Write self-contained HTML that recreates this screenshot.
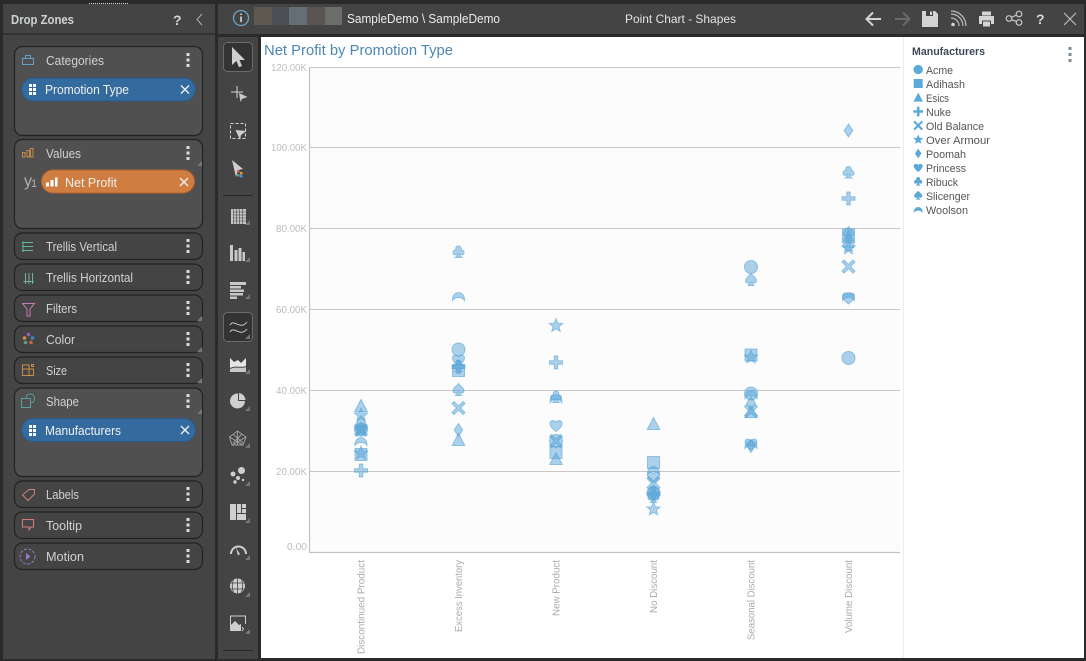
<!DOCTYPE html>
<html><head><meta charset="utf-8"><style>
html,body{margin:0;padding:0;background:#2a2a2a;width:1086px;height:661px;overflow:hidden}
svg{display:block}
text{font-family:"Liberation Sans",sans-serif}
.z{fill:#444;stroke:#222;stroke-width:1.2}
.zl{fill:#505050;stroke:#222;stroke-width:1.2}
.t{fill:#cfd2d4;font-size:12.5px}
.p{fill:#f0f0f0;font-size:12.5px}
.y{fill:#bdbdbd;font-size:10.5px;text-anchor:end}
.x{fill:#ababa6;font-size:10.5px;text-anchor:end}
.l{fill:#555;font-size:11px}
.i{fill:#cdcdcd}
.g{stroke:#c6c6c6;stroke-width:1}
</style></head><body>
<svg width="1086" height="661" viewBox="0 0 1086 661" xmlns="http://www.w3.org/2000/svg">
<defs>
<g id="ci"><circle r="6.5"/></g>
<g id="sq"><rect x="-6" y="-6" width="12" height="12"/></g>
<g id="tr"><path d="M0-6.5L6.3 5.5H-6.3Z"/></g>
<g id="pl"><path d="M-1.7-6.5H1.7V-1.7H6.5V1.7H1.7V6.5H-1.7V1.7H-6.5V-1.7H-1.7Z"/></g>
<g id="xx"><path d="M-4.5-6.5L0-2 4.5-6.5 6.5-4.5 2 0 6.5 4.5 4.5 6.5 0 2-4.5 6.5-6.5 4.5-2 0-6.5-4.5Z"/></g>
<g id="st"><path d="M0-6.8L1.9-2.3 6.6-2 3 1.1 4.1 5.8 0 3.3 -4.1 5.8 -3 1.1 -6.6-2 -1.9-2.3Z"/></g>
<g id="di"><path d="M0-6.5L4.3 0 0 6.5-4.3 0Z"/></g>
<g id="he"><path d="M0 6C-3 3.5-6 1-6-2C-6-5-2-6 0-3.2C2-6 6-5 6-2C6 1 3 3.5 0 6Z"/></g>
<g id="cl"><path d="M-1 1.8C-3.5 4-6 2.5-5.5 0C-5.2-1.8-3.6-2.2-2.4-1.8C-3.6-4-2-6 0-6C2-6 3.6-4 2.4-1.8C3.6-2.2 5.2-1.8 5.5 0C6 2.5 3.5 4 1 1.8C1.2 3.4 2 4.6 3.5 5.5H-3.5C-2 4.6-1.2 3.4-1 1.8Z"/></g>
<g id="sp"><path d="M0-6.5C2 -3.8 5.5-2 5.5.7C5.5 3 2.6 3.6 1 2.2C1.2 3.6 2 4.8 3.5 5.5H-3.5C-2 4.8-1.2 3.6-1 2.2C-2.6 3.6-5.5 3-5.5.7C-5.5-2-2-3.8 0-6.5Z"/></g>
<g id="wo"><path d="M-6 4.5C-6.5-6 6.5-6 6 4.5C3.5 .5-3.5 .5-6 4.5Z"/></g>
<g id="keb" fill="#dcdcdc"><rect x="-1.5" y="-7" width="3" height="3"/><rect x="-1.5" y="-1.5" width="3" height="3"/><rect x="-1.5" y="4" width="3" height="3"/></g>
<g id="grp" fill="#fff"><rect width="3" height="3"/><rect x="4" width="3" height="3"/><rect y="4" width="3" height="3"/><rect x="4" y="4" width="3" height="3"/><rect y="8" width="3" height="3"/><rect x="4" y="8" width="3" height="3"/></g>
<path id="cor" d="M5 0V5H0Z" fill="#777"/>
<path id="cur" d="M-6-10L7 3H1.5L4 9 1 10.300-1.600 4-6 8Z"/>
<path id="clo" d="M-4-4L4 4M4-4L-4 4" stroke="#f2f2f2" stroke-width="1.3" fill="none"/>
</defs>

<!-- frames -->
<rect width="1086" height="661" fill="#2a2a2a"/>
<rect x="3" y="4" width="212" height="655" fill="#444"/>
<rect x="3" y="33" width="212" height="2" fill="#333"/>
<path d="M89 3.5H129" stroke="#ddd" stroke-dasharray="1 1"/>
<rect x="218" y="4" width="866" height="30" fill="#444"/>
<rect x="218" y="37" width="40" height="622" fill="#444"/>
<rect x="261" y="37" width="823" height="621" fill="#fff"/>

<!-- left header -->
<text x="11" y="24" class="t" font-weight="bold" textLength="63" lengthAdjust="spacingAndGlyphs">Drop Zones</text>
<text x="173" y="25" fill="#d6d6d6" font-size="14" font-weight="bold">?</text>
<path d="M202 14L197 19.5 202 25" stroke="#aaa" fill="none" stroke-width="1.1"/>

<!-- zones -->
<rect class="zl" x="14.500" y="46.500" width="188" height="89" rx="8"/>
<rect class="zl" x="14.500" y="139.500" width="188" height="89" rx="8"/>
<rect class="z" x="14.500" y="233" width="188" height="26.500" rx="8"/>
<rect class="z" x="14.500" y="264" width="188" height="26.500" rx="8"/>
<rect class="z" x="14.500" y="295" width="188" height="26.500" rx="8"/>
<rect class="z" x="14.500" y="326" width="188" height="26.500" rx="8"/>
<rect class="z" x="14.500" y="357" width="188" height="26.500" rx="8"/>
<rect class="zl" x="14.500" y="388" width="188" height="88.500" rx="8"/>
<rect class="z" x="14.500" y="481" width="188" height="26.500" rx="8"/>
<rect class="z" x="14.500" y="512" width="188" height="26.500" rx="8"/>
<rect class="z" x="14.500" y="543" width="188" height="26.500" rx="8"/>

<text x="46" y="65" class="t" textLength="58" lengthAdjust="spacingAndGlyphs">Categories</text>
<text x="46" y="158" class="t" textLength="35" lengthAdjust="spacingAndGlyphs">Values</text>
<text x="46" y="251" class="t" textLength="71" lengthAdjust="spacingAndGlyphs">Trellis Vertical</text>
<text x="46" y="282" class="t" textLength="87" lengthAdjust="spacingAndGlyphs">Trellis Horizontal</text>
<text x="46" y="313" class="t" textLength="31" lengthAdjust="spacingAndGlyphs">Filters</text>
<text x="46" y="344" class="t" textLength="29" lengthAdjust="spacingAndGlyphs">Color</text>
<text x="46" y="375" class="t" textLength="21" lengthAdjust="spacingAndGlyphs">Size</text>
<text x="46" y="406" class="t" textLength="33" lengthAdjust="spacingAndGlyphs">Shape</text>
<text x="46" y="499" class="t" textLength="33" lengthAdjust="spacingAndGlyphs">Labels</text>
<text x="46" y="530" class="t" textLength="36" lengthAdjust="spacingAndGlyphs">Tooltip</text>
<text x="46" y="561" class="t" textLength="38" lengthAdjust="spacingAndGlyphs">Motion</text>

<use href="#keb" x="188" y="60"/><use href="#keb" x="188" y="153"/><use href="#keb" x="188" y="246"/><use href="#keb" x="188" y="277"/><use href="#keb" x="188" y="308"/><use href="#keb" x="188" y="339"/><use href="#keb" x="188" y="370"/><use href="#keb" x="188" y="401"/><use href="#keb" x="188" y="494"/><use href="#keb" x="188" y="525"/><use href="#keb" x="188" y="556"/>
<use href="#cor" x="197" y="161"/><use href="#cor" x="197" y="316"/><use href="#cor" x="197" y="347"/><use href="#cor" x="197" y="378"/><use href="#cor" x="197" y="409"/>

<!-- zone icons -->
<g fill="none" stroke-width="1">
<path d="M22.500 58.500H33.500V64.500H22.500ZM25.500 58.500V55.500H30.500V58.500" stroke="#5f9fc8"/>
<path d="M22.500 157V152.500H25V157ZM27 157V150.500H29.500V157Z" stroke="#c58a45"/><path d="M30.500 157V148.500H33V157Z" stroke="#c58a45"/>
<path d="M23 241.500V252M22 242.500H33M22 246.500H33M22 250.500H33" stroke="#5fb8a0"/>
<path d="M23.500 281.500H34M25.500 273V284M29 273V284M32.500 273V284" stroke="#6fb39a"/>
<path d="M22.500 303.500H34.500L30 309V316H27V309Z" stroke="#c779b9"/>
<path d="M22.500 369H33.500V375.500H22.500V365H29V375.500" stroke="#c58f4a"/><rect x="31.500" y="364.500" width="2" height="2" stroke="#c58f4a"/>
<path d="M21.500 398.500H30.500V407.500H21.500ZM26 398C26 394 29 394 30.500 394C33 394 34.500 396 34.500 399C34.500 401 33 403 31 403" stroke="#5b9c9c"/>
<path d="M29 489.500H34.500V494L28 500.500 22.500 495Z" stroke="#d07d7d"/>
<path d="M22.500 519.500H33.500V527H31L29 530V527H22.500Z" stroke="#d67b7b"/>
<circle cx="27.500" cy="556.500" r="7.500" stroke="#9a78c8" stroke-dasharray="3 1.500"/>
</g>
<path d="M26 553L30.500 556.500 26 560Z" fill="#9a78c8"/>
<circle cx="28.500" cy="334.500" r="1.800" fill="#8d62b8"/><circle cx="32.500" cy="338" r="1.800" fill="#4a83c4"/><circle cx="24.500" cy="338" r="1.800" fill="#d08a3f"/><circle cx="25.500" cy="342.500" r="1.800" fill="#5f9c78"/><circle cx="31" cy="342.500" r="1.800" fill="#d2613f"/>

<!-- pills -->
<rect x="21.500" y="78" width="174" height="23" rx="11.500" fill="#346b9f" stroke="#2a5a88"/>
<use href="#grp" x="29" y="84"/>
<text x="45" y="94" class="p" textLength="84" lengthAdjust="spacingAndGlyphs">Promotion Type</text>
<use href="#clo" x="185" y="89.500"/>

<text x="24" y="186" fill="#b0b0b0" font-size="16" textLength="8" lengthAdjust="spacingAndGlyphs">y</text><text x="31" y="187" fill="#b0b0b0" font-size="11">1</text>
<rect x="41.500" y="170" width="153" height="23" rx="11.500" fill="#cf7d40" stroke="#b5622c"/>
<path d="M46 182.500h3v4h-3zM50.500 180h3v6.500h-3zM55 177.500h2.500v9H55z" fill="#fff"/>
<text x="65" y="187" class="p" textLength="52" lengthAdjust="spacingAndGlyphs">Net Profit</text>
<use href="#clo" x="184" y="182"/>

<rect x="21.500" y="418.500" width="174" height="23" rx="11.500" fill="#346b9f" stroke="#2a5a88"/>
<use href="#grp" x="29" y="425"/>
<text x="45" y="435" class="p" textLength="76" lengthAdjust="spacingAndGlyphs">Manufacturers</text>
<use href="#clo" x="185" y="430"/>

<!-- top bar -->
<circle cx="241" cy="18" r="7.500" fill="none" stroke="#6fa3c8" stroke-width="1.300"/>
<rect x="240.300" y="16.500" width="1.500" height="5.500" fill="#d8e4ec"/><rect x="240.300" y="13.500" width="1.500" height="1.500" fill="#d8e4ec"/>
<rect x="254" y="7" width="18" height="18" fill="#5d5850"/><rect x="272" y="7" width="17" height="18" fill="#4d4f54"/><rect x="289" y="7" width="18" height="18" fill="#646f75"/><rect x="307" y="7" width="18" height="18" fill="#5a5552"/><rect x="325" y="7" width="17" height="18" fill="#696e69"/>
<text x="347" y="23" fill="#ececec" font-size="12.500" textLength="153" lengthAdjust="spacingAndGlyphs">SampleDemo \ SampleDemo</text>
<text x="625" y="23" fill="#e4e4e4" font-size="12" textLength="111" lengthAdjust="spacingAndGlyphs">Point Chart - Shapes</text>

<g fill="none" stroke="#d4d4d4" stroke-width="2">
<path d="M881 19H867M873 12.500L866.500 19 873 25.500"/>
<path d="M895 19H909M903 12.500L909.500 19 903 25.500" stroke="#6a6a6a"/>
</g>
<path d="M922 11H935L938 14V27H922Z" fill="#d4d4d4"/><rect x="926" y="11" width="7" height="5" fill="#444"/><rect x="930" y="11.500" width="2" height="3.500" fill="#d4d4d4"/>
<circle cx="953" cy="24.500" r="1.800" fill="#d4d4d4"/>
<path d="M951 18A8 8 0 0 1 959 26M951 14A12 12 0 0 1 963 26M951 11A15 15 0 0 1 966 26" fill="none" stroke="#bdbdbd" stroke-width="1.200"/>
<path d="M982 11.500H991V15.500H982ZM979 16H994V24H991V20.500H982V24H979Z" fill="#d4d4d4"/><rect x="983" y="21.500" width="7" height="5" fill="#d4d4d4"/>
<g fill="none" stroke="#c8c8c8" stroke-width="1.200"><circle cx="1009" cy="18.500" r="2.800"/><circle cx="1019" cy="14" r="2.800"/><circle cx="1019" cy="22.500" r="2.800"/><path d="M1011.500 17.300L1016.500 15M1011.500 19.700L1016.500 21.500"/></g>
<text x="1036" y="24" fill="#d8d8d8" font-size="14" font-weight="bold">?</text>
<path d="M1064 13L1076 25M1076 13L1064 25" stroke="#bdbdbd" stroke-width="1.200"/>

<!-- toolbar -->
<rect x="223.500" y="42.500" width="29" height="29" rx="4" fill="#333" stroke="#6a6a6a"/>
<rect x="223.500" y="312.500" width="29" height="29" rx="4" fill="#333" stroke="#6a6a6a"/>
<path d="M223 195.500H253M223 650.500H253" stroke="#262626"/>
<use href="#cur" x="238" y="57" fill="#cfcfcf"/>
<path d="M231 92H243M237 86V98" stroke="#d4d4d4" stroke-width="1" fill="none"/><path d="M239 93L247.500 97 242 99 240.500 102Z" fill="#c8c8c8"/>
<rect x="230.500" y="123.500" width="15" height="15" fill="none" stroke="#d4d4d4" stroke-dasharray="3 2"/><path d="M235.500 130L246.500 131 241 135 240 139.500Z" fill="#cfcfcf"/>
<path d="M232 160L243 169 238 170 236 177Z" fill="#cfcfcf"/><rect x="237" y="170" width="2.500" height="2.500" fill="#d85f5f"/><rect x="240" y="172" width="2.500" height="2.500" fill="#e0a040"/><rect x="237" y="174" width="2.500" height="2.500" fill="#40a890"/><rect x="240" y="175" width="2.500" height="2.500" fill="#4a90d0"/>
<!-- grid -->
<path d="M231 209H246V224H231Z" fill="#c4c4c4"/>
<path d="M233 212H246M233 215H246M233 218H246M233 221H246M233.500 209V224M236.500 209V224M239.500 209V224M242.500 209V224" stroke="#444" stroke-width=".6"/>
<use href="#cor" x="245" y="220"/>
<path d="M230 245h3v16h-3zM234.500 250h3v11h-3zM238.500 248h3v13h-3zM242.500 252h2.500v9h-2.500z" fill="#c8c8c8"/>
<use href="#cor" x="245" y="257"/>
<path d="M230 282h16v3h-16zM230 286h11v2.500h-11zM230 289.500h14v2.500h-14zM230 293h13v2.500h-13zM230 296.500h7v2.500h-7z" fill="#c8c8c8"/>
<use href="#cor" x="245" y="294"/>
<path d="M230 325C234 318 240 331 247 322M230 332C234 325 240 338 247 329" fill="none" stroke="#c8c8c8" stroke-width="1"/>
<use href="#cor" x="245" y="334"/>
<path d="M230 358L234 362 238 360 241 363 246 358V366C241 368 236 365 230 368Z" fill="#e6e6e6"/><path d="M230 369C236 366 241 369 246 367V372H230Z" fill="#c8c8c8"/>
<use href="#cor" x="245" y="369"/>
<circle cx="237.500" cy="401" r="7.500" fill="#cfcfcf"/><path d="M238.500 400.500V392.500A8 8 0 0 1 246 400.500Z" fill="#cfcfcf" stroke="#444" stroke-width="1"/>
<use href="#cor" x="245" y="406"/>
<path d="M237.500 431L246 437 243 445H232L229.500 437ZM237.500 431V445M229.500 437L243 445M246 437L232 445M233 434L243 443M242 434L233 443" fill="none" stroke="#a4a4a4" stroke-width=".9"/>
<use href="#cor" x="245" y="443"/>
<circle cx="241.500" cy="470.500" r="3.500" fill="#cfcfcf"/><circle cx="233" cy="474" r="2.500" fill="#cfcfcf"/><circle cx="238" cy="478" r="2" fill="#cfcfcf"/><circle cx="235" cy="482" r="1.700" fill="#cfcfcf"/><circle cx="243" cy="480" r="1.200" fill="#cfcfcf"/>
<use href="#cor" x="245" y="481"/>
<path d="M230 504h6v16h-6zM237 504h4v9h-4zM242 504h4v4h-4zM242 509h4v4h-4zM237 514h9v6h-9z" fill="#cfcfcf"/>
<use href="#cor" x="245" y="518"/>
<path d="M231 554A7.500 7.500 0 0 1 246 554" fill="none" stroke="#cfcfcf" stroke-width="2"/><path d="M236 548L240 554 238 555.500Z" fill="#cfcfcf"/>
<use href="#cor" x="245" y="555"/>
<circle cx="237.500" cy="586" r="7.500" fill="#cfcfcf"/><path d="M230 583H245M230 589H245M237.500 578.500V593.500M233.500 579.500Q231 586 233.500 592.500M241.500 579.500Q244 586 241.500 592.500" stroke="#444" stroke-width=".8" fill="none"/>
<use href="#cor" x="245" y="592"/>
<path d="M230.500 631V616H245.500V624" fill="none" stroke="#cfcfcf"/><path d="M231 631V625L235 621 239 625 241 624V631Z" fill="#cfcfcf"/><path d="M238 627L236.500 629 238 631M242 627L243.500 629 242 631" fill="none" stroke="#cfcfcf"/>
<use href="#cor" x="245" y="629"/>

<!-- chart -->
<text x="264" y="55" fill="#4a87b2" font-size="15" textLength="189" lengthAdjust="spacingAndGlyphs">Net Profit by Promotion Type</text>
<rect x="310" y="68" width="590" height="484" fill="#fcfcfc"/>
<rect x="903" y="37" width="1" height="621" fill="#ececec"/>
<path class="g" d="M309.500 67.500H900M309.500 147.500H900M309.500 228.500H900M309.500 309.500H900M309.500 390.500H900M309.500 471.500H900"/>
<path d="M309.500 67V552.500H900" fill="none" stroke="#c2c2c2" stroke-width="1.200"/>
<text x="307" y="71" class="y" textLength="36" lengthAdjust="spacingAndGlyphs">120.00K</text><text x="307" y="151" class="y" textLength="36" lengthAdjust="spacingAndGlyphs">100.00K</text><text x="307" y="232" class="y" textLength="31" lengthAdjust="spacingAndGlyphs">80.00K</text><text x="307" y="313" class="y" textLength="31" lengthAdjust="spacingAndGlyphs">60.00K</text><text x="307" y="394" class="y" textLength="31" lengthAdjust="spacingAndGlyphs">40.00K</text><text x="307" y="475" class="y" textLength="31" lengthAdjust="spacingAndGlyphs">20.00K</text><text x="307" y="550" class="y" textLength="20" lengthAdjust="spacingAndGlyphs">0.00</text>

<text transform="translate(364.500 560) rotate(-90)" class="x" textLength="94" lengthAdjust="spacingAndGlyphs">Discontinued Product</text>
<text transform="translate(462 560) rotate(-90)" class="x" textLength="72" lengthAdjust="spacingAndGlyphs">Excess Inventory</text>
<text transform="translate(559.500 560) rotate(-90)" class="x" textLength="56" lengthAdjust="spacingAndGlyphs">New Product</text>
<text transform="translate(657 560) rotate(-90)" class="x" textLength="53" lengthAdjust="spacingAndGlyphs">No Discount</text>
<text transform="translate(754.500 560) rotate(-90)" class="x" textLength="80" lengthAdjust="spacingAndGlyphs">Seasonal Discount</text>
<text transform="translate(852 560) rotate(-90)" class="x" textLength="73" lengthAdjust="spacingAndGlyphs">Volume Discount</text>

<g fill="#5aa5d7" fill-opacity=".5" stroke="#5aa5d7" stroke-opacity=".6" stroke-width="1">
<use href="#tr" x="361" y="406"/><use href="#st" x="361" y="415"/><use href="#di" x="361" y="422"/><use href="#ci" x="361" y="429.500"/><use href="#st" x="361" y="429"/><use href="#he" x="361" y="430"/><use href="#xx" x="361" y="430"/><use href="#wo" x="361" y="441"/><use href="#sq" x="361" y="454.500"/><use href="#st" x="361" y="453"/><use href="#pl" x="361" y="470.500"/>
<use href="#cl" x="458.500" y="252"/><use href="#wo" x="458.500" y="296"/><use href="#ci" x="458.500" y="349.500"/><use href="#he" x="458.500" y="360"/><use href="#sq" x="458.500" y="370.500"/><use href="#cl" x="458.500" y="366"/><use href="#pl" x="458.500" y="367"/><use href="#sp" x="458.500" y="390"/><use href="#xx" x="458.500" y="408"/><use href="#di" x="458.500" y="430"/><use href="#tr" x="458.500" y="440"/>
<use href="#st" x="556" y="325.500"/><use href="#pl" x="556" y="362.500"/><use href="#cl" x="556" y="397"/><use href="#wo" x="556" y="398"/><use href="#he" x="556" y="425.500"/><use href="#ci" x="556" y="441"/><use href="#xx" x="556" y="441"/><use href="#sq" x="556" y="452.500"/><use href="#tr" x="556" y="459"/>
<use href="#tr" x="653.500" y="424"/><use href="#sq" x="653.500" y="462.500"/><use href="#wo" x="653.500" y="470"/><use href="#he" x="653.500" y="477"/><use href="#xx" x="653.500" y="483"/><use href="#ci" x="653.500" y="493"/><use href="#cl" x="653.500" y="492"/><use href="#pl" x="653.500" y="494"/><use href="#sp" x="653.500" y="497"/><use href="#st" x="653.500" y="509"/>
<use href="#ci" x="751" y="267"/><use href="#sp" x="751" y="280"/><use href="#sq" x="751" y="355"/><use href="#st" x="751" y="357"/><use href="#ci" x="751" y="393.500"/><use href="#wo" x="751" y="394"/><use href="#di" x="751" y="403"/><use href="#xx" x="751" y="411"/><use href="#tr" x="751" y="412"/><use href="#he" x="751" y="444"/><use href="#di" x="751" y="446"/><use href="#wo" x="751" y="444"/>
<use href="#di" x="848.500" y="130.500"/><use href="#cl" x="848.500" y="172.500"/><use href="#pl" x="848.500" y="198.500"/><use href="#sq" x="848.500" y="235"/><use href="#sp" x="848.500" y="233"/><use href="#tr" x="848.500" y="237"/><use href="#cl" x="848.500" y="245"/><use href="#st" x="848.500" y="248"/><use href="#xx" x="848.500" y="266.500"/><use href="#he" x="848.500" y="298"/><use href="#wo" x="848.500" y="296"/><use href="#ci" x="848.500" y="358"/>
</g>

<!-- legend -->
<text x="912" y="55" fill="#3c4a58" font-size="11" font-weight="bold" textLength="73" lengthAdjust="spacingAndGlyphs">Manufacturers</text>
<rect x="1068.500" y="47" width="3" height="3" fill="#7d8b97"/><rect x="1068.500" y="53" width="3" height="3" fill="#7d8b97"/><rect x="1068.500" y="59" width="3" height="3" fill="#7d8b97"/>
<g fill="#5aa9d6">
<use href="#ci" transform="translate(918.200 69.500) scale(.72)"/>
<use href="#sq" transform="translate(918.200 83.500) scale(.75)"/>
<use href="#tr" transform="translate(918.200 97.500) scale(.75)"/>
<use href="#pl" transform="translate(918.200 111.500) scale(.75)"/>
<use href="#xx" transform="translate(918.200 125.500) scale(.75)"/>
<use href="#st" transform="translate(918.200 139.500) scale(.75)"/>
<use href="#di" transform="translate(918.200 153.500) scale(.75)"/>
<use href="#he" transform="translate(918.200 167.500) scale(.75)"/>
<use href="#cl" transform="translate(918.200 181.500) scale(.75)"/>
<use href="#sp" transform="translate(918.200 195.500) scale(.75)"/>
<use href="#wo" transform="translate(918.200 209.500) scale(.75)"/>
</g>
<text x="926" y="74" class="l" textLength="27" lengthAdjust="spacingAndGlyphs">Acme</text>
<text x="926" y="88" class="l" textLength="39" lengthAdjust="spacingAndGlyphs">Adihash</text>
<text x="926" y="102" class="l" textLength="23" lengthAdjust="spacingAndGlyphs">Esics</text>
<text x="926" y="116" class="l" textLength="25" lengthAdjust="spacingAndGlyphs">Nuke</text>
<text x="926" y="130" class="l" textLength="58" lengthAdjust="spacingAndGlyphs">Old Balance</text>
<text x="926" y="144" class="l" textLength="64" lengthAdjust="spacingAndGlyphs">Over Armour</text>
<text x="926" y="158" class="l" textLength="40" lengthAdjust="spacingAndGlyphs">Poomah</text>
<text x="926" y="172" class="l" textLength="40" lengthAdjust="spacingAndGlyphs">Princess</text>
<text x="926" y="186" class="l" textLength="32" lengthAdjust="spacingAndGlyphs">Ribuck</text>
<text x="926" y="200" class="l" textLength="44" lengthAdjust="spacingAndGlyphs">Slicenger</text>
<text x="926" y="214" class="l" textLength="42" lengthAdjust="spacingAndGlyphs">Woolson</text>
</svg>
</body></html>
